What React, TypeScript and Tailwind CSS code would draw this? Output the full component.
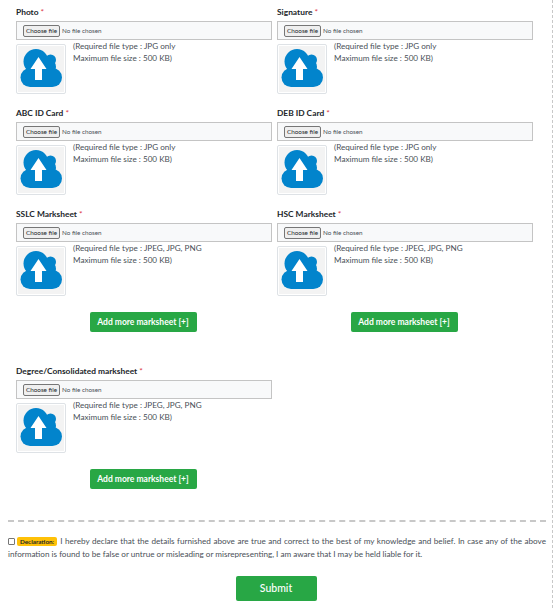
const font = "[font-family:Lato,sans-serif]";

function Cloud() {
  return (
    <div className="flex h-[50px] w-[50px] shrink-0 items-center justify-center rounded-[2px] border border-[#dee2e6] bg-white p-[1px]">
      <svg viewBox="0 0 46 46" className="h-[46px] w-[46px]">
        <rect width="46" height="46" fill="#f3f3f3" />
        <g fill="#0284cc">
          <circle cx="18" cy="15.5" r="12.5" />
          <circle cx="32.5" cy="14" r="5.5" />
          <circle cx="29" cy="21" r="9" />
          <circle cx="12" cy="31.5" r="9.5" />
          <circle cx="34.5" cy="31.5" r="9.5" />
          <rect x="12" y="20" width="22" height="21" />
        </g>
        <path d="M20.5 11 L28.5 23 L24 23 L24 34 L17 34 L17 23 L12.5 23 Z" fill="#ffffff" />
      </svg>
    </div>
  );
}

function Field({ label, types }: { label: string; types: string }) {
  return (
    <div className="flex h-[101px] flex-col">
      <div className="h-[17px] pt-[1px] text-[8.4px] font-bold leading-[14px] text-[#212529]">
        {label} <span className="font-normal text-[#dc3545]">*</span>
      </div>
      <div className="flex h-[19px] items-center border border-[#c4c4c4] bg-[#f8f9fa] pl-[6px] pt-[1px]">
        <span className="flex h-[12px] w-[37px] items-center justify-center rounded-[2px] border border-[#767676] bg-[#efefef] text-[6.3px] text-[#212529]">
          Choose file
        </span>
        <span className="ml-[2px] text-[6.3px] text-[#495057]">No file chosen</span>
      </div>
      <div className="mt-[4px] flex">
        <Cloud />
        <div className="ml-[7px] text-[8.15px] leading-[12px] text-[#495057]">
          <div className="-mt-[4px]">(Required file type : {types}</div>
          <div>Maximum file size : 500 KB)</div>
        </div>
      </div>
    </div>
  );
}

function AddBtn() {
  return (
    <div className="flex justify-center pr-[2px]">
      <button className="h-[20px] w-[107px] rounded-[2px] bg-[#28a745] text-[8.5px] font-bold text-white">
        Add more marksheet [+]
      </button>
    </div>
  );
}

export default function App() {
  return (
    <div className={`${font} h-[608px] w-[554px] overflow-hidden bg-white`}>
      <div className="h-[608px] w-[553px] border-r border-dashed border-[#c8c8c8] pl-[8px] pr-[6px] pt-[4px]">
        <div className="grid grid-cols-[256px_256px] gap-x-[5px] pl-[8px]">
          <Field label="Photo" types="JPG only" />
          <Field label="Signature" types="JPG only" />
          <Field label="ABC ID Card" types="JPG only" />
          <Field label="DEB ID Card" types="JPG only" />
          <Field label="SSLC Marksheet" types="JPEG, JPG, PNG" />
          <Field label="HSC Marksheet" types="JPEG, JPG, PNG" />
          <div className="h-[56px] pt-[5px]"><AddBtn /></div>
          <div className="h-[56px] pt-[5px]"><AddBtn /></div>
          <div className="h-[100px]"><Field label="Degree/Consolidated marksheet" types="JPEG, JPG, PNG" /></div>
          <div />
          <div className="h-[57px] pt-[6px]"><AddBtn /></div>
        </div>
        <div className="border-t-2 border-dashed border-[#c8c8c8]" />
        <div className="mt-[13px] text-justify text-[8.15px] leading-[12px] text-[#495057]">
          <input type="checkbox" readOnly className="mr-[2px] h-[7px] w-[7px] appearance-none rounded-[1px] border border-[#767676] bg-white align-[-0.5px]" />
          <span className="mr-[3px] rounded-[2px] bg-[#ffc107] px-[3px] py-[1px] text-[6.3px] font-bold text-[#212529]">Declaration:</span>
          I hereby declare that the details furnished above are true and correct to the best of my knowledge and belief. In case any of the above information is found to be false or untrue or misleading or misrepresenting, I am aware that I may be held liable for it.
        </div>
        <div className="mt-[16px] flex justify-center pr-[2px]">
          <button className="h-[25px] w-[81px] rounded-[2px] bg-[#28a745] text-[10.5px] font-medium text-white">Submit</button>
        </div>
      </div>
    </div>
  );
}
